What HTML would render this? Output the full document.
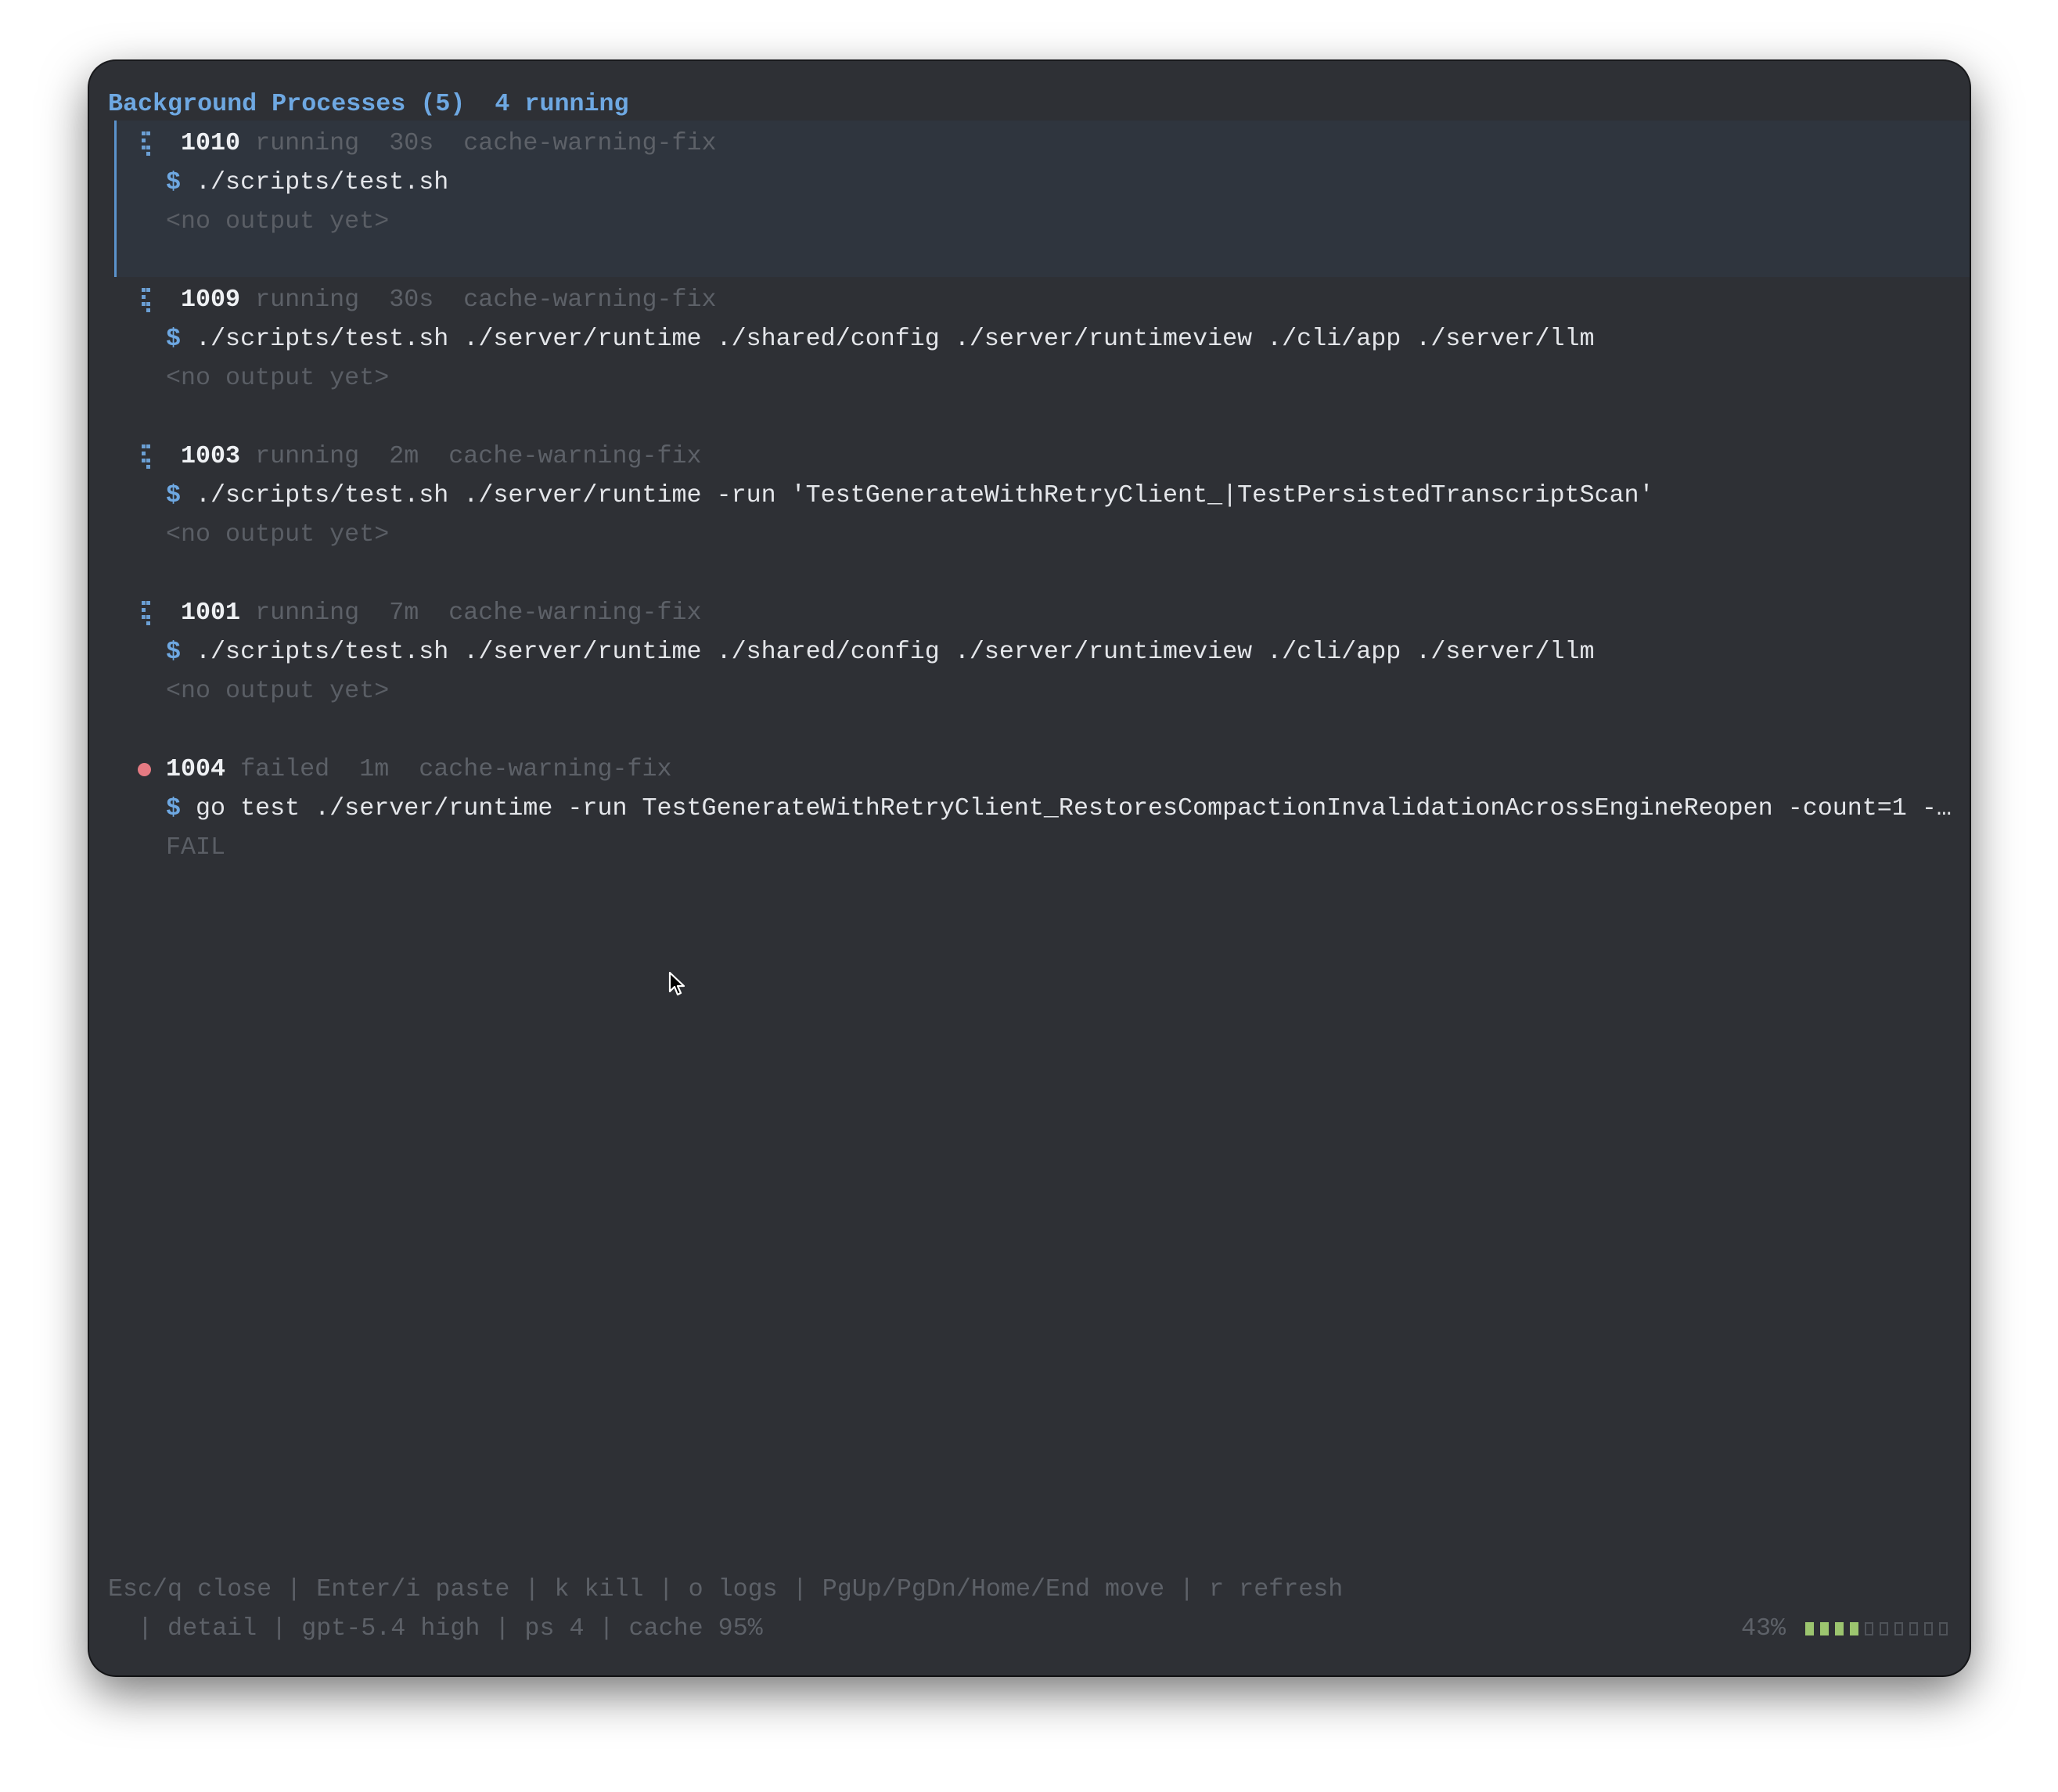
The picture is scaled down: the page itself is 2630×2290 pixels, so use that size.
<!DOCTYPE html>
<html><head><meta charset="utf-8"><style>
html,body{margin:0;padding:0;background:#fff;width:2630px;height:2290px;overflow:hidden}
.win{position:absolute;left:114px;top:78px;width:2403px;height:2063px;background:#2e3035;border-radius:34px;box-shadow:0 22px 60px rgba(0,0,0,.55),0 0 0 2px #1c1d20;overflow:hidden}
.t{position:absolute;font-family:"Liberation Mono","DejaVu Sans Mono",monospace;font-size:31.7px;line-height:50px;white-space:pre;color:#e4e6ea}
.b{color:#6ea8e2;font-weight:bold}
.w{color:#eef0f3;font-weight:bold}
.d{color:#5d6168}
.dl{color:#5a5e65}
.blue{color:#6ea8e2;font-weight:bold}
.sel{position:absolute;left:32px;top:76px;width:2371px;height:200px;background:#2f353e}
.bar{position:absolute;left:32px;top:76px;width:3px;height:200px;background:#5b93cc}
.h{position:absolute;width:5px;height:5px;background:#6b9fd4}
.dot{position:absolute;width:17px;height:17px;border-radius:50%;background:#e57a82}
.g{position:absolute;top:1995px;width:11px;height:17px}
</style></head><body>
<div class="win">
<div class="sel"></div><div class="bar"></div>

<div class="t b" style="left:24px;top:30px">Background Processes (5)  4 running</div>

<div class="h" style="left:67px;top:90px"></div><div class="h" style="left:73px;top:90px"></div>
<div class="h" style="left:67px;top:99px"></div><div class="h" style="left:67px;top:108px"></div><div class="h" style="left:73px;top:108px"></div><div class="h" style="left:73px;top:116px"></div>

<div class="t" style="left:117px;top:80px"><span class="w">1010</span> <span class="d">running  30s  cache-warning-fix</span></div>
<div class="t" style="left:98px;top:130px"><span class="blue">$</span> ./scripts/test.sh</div>
<div class="t dl" style="left:98px;top:180px">&lt;no output yet&gt;</div>

<div class="h" style="left:67px;top:290px"></div><div class="h" style="left:73px;top:290px"></div>
<div class="h" style="left:67px;top:299px"></div><div class="h" style="left:67px;top:308px"></div><div class="h" style="left:73px;top:308px"></div><div class="h" style="left:73px;top:316px"></div>
<div class="t" style="left:117px;top:280px"><span class="w">1009</span> <span class="d">running  30s  cache-warning-fix</span></div>
<div class="t" style="left:98px;top:330px"><span class="blue">$</span> ./scripts/test.sh ./server/runtime ./shared/config ./server/runtimeview ./cli/app ./server/llm</div>
<div class="t dl" style="left:98px;top:380px">&lt;no output yet&gt;</div>

<div class="h" style="left:67px;top:490px"></div><div class="h" style="left:73px;top:490px"></div>
<div class="h" style="left:67px;top:499px"></div><div class="h" style="left:67px;top:508px"></div><div class="h" style="left:73px;top:508px"></div><div class="h" style="left:73px;top:516px"></div>
<div class="t" style="left:117px;top:480px"><span class="w">1003</span> <span class="d">running  2m  cache-warning-fix</span></div>
<div class="t" style="left:98px;top:530px"><span class="blue">$</span> ./scripts/test.sh ./server/runtime -run 'TestGenerateWithRetryClient_|TestPersistedTranscriptScan'</div>
<div class="t dl" style="left:98px;top:580px">&lt;no output yet&gt;</div>

<div class="h" style="left:67px;top:690px"></div><div class="h" style="left:73px;top:690px"></div>
<div class="h" style="left:67px;top:699px"></div><div class="h" style="left:67px;top:708px"></div><div class="h" style="left:73px;top:708px"></div><div class="h" style="left:73px;top:716px"></div>
<div class="t" style="left:117px;top:680px"><span class="w">1001</span> <span class="d">running  7m  cache-warning-fix</span></div>
<div class="t" style="left:98px;top:730px"><span class="blue">$</span> ./scripts/test.sh ./server/runtime ./shared/config ./server/runtimeview ./cli/app ./server/llm</div>
<div class="t dl" style="left:98px;top:780px">&lt;no output yet&gt;</div>

<div class="dot" style="left:62px;top:897px"></div>
<div class="t" style="left:98px;top:880px"><span class="w">1004</span> <span class="d">failed  1m  cache-warning-fix</span></div>
<div class="t" style="left:98px;top:930px;width:2290px;overflow:hidden"><span class="blue">$</span> go test ./server/runtime -run TestGenerateWithRetryClient_RestoresCompactionInvalidationAcrossEngineReopen -count=1 -…</div>
<div class="t dl" style="left:98px;top:980px">FAIL</div>

<div class="t d" style="left:24px;top:1928px">Esc/q close | Enter/i paste | k kill | o logs | PgUp/PgDn/Home/End move | r refresh</div>
<div class="t d" style="left:24px;top:1978px">  | detail | gpt-5.4 high | ps 4 | cache 95%</div>
<div class="t d" style="left:2111px;top:1978px">43%</div>
<div class="g" style="left:2193px;background:#9cc56f"></div>
<div class="g" style="left:2212px;background:#9cc56f"></div>
<div class="g" style="left:2231px;background:#9cc56f"></div>
<div class="g" style="left:2250px;background:#9cc56f"></div>
<div class="g" style="left:2269px;border:2px solid #4f5359;box-sizing:border-box"></div>
<div class="g" style="left:2288px;border:2px solid #4f5359;box-sizing:border-box"></div>
<div class="g" style="left:2307px;border:2px solid #4f5359;box-sizing:border-box"></div>
<div class="g" style="left:2326px;border:2px solid #4f5359;box-sizing:border-box"></div>
<div class="g" style="left:2345px;border:2px solid #4f5359;box-sizing:border-box"></div>
<div class="g" style="left:2364px;border:2px solid #4f5359;box-sizing:border-box"></div>
</div>
<svg style="position:absolute;left:853px;top:1240px" width="28" height="36" viewBox="0 0 28 36">
<path d="M3 3 L3 27 L9 21 L13 31 L17 29 L13 20 L21 20 Z" fill="#000" stroke="#fff" stroke-width="2.2" stroke-linejoin="round"/>
</svg>
</body></html>
